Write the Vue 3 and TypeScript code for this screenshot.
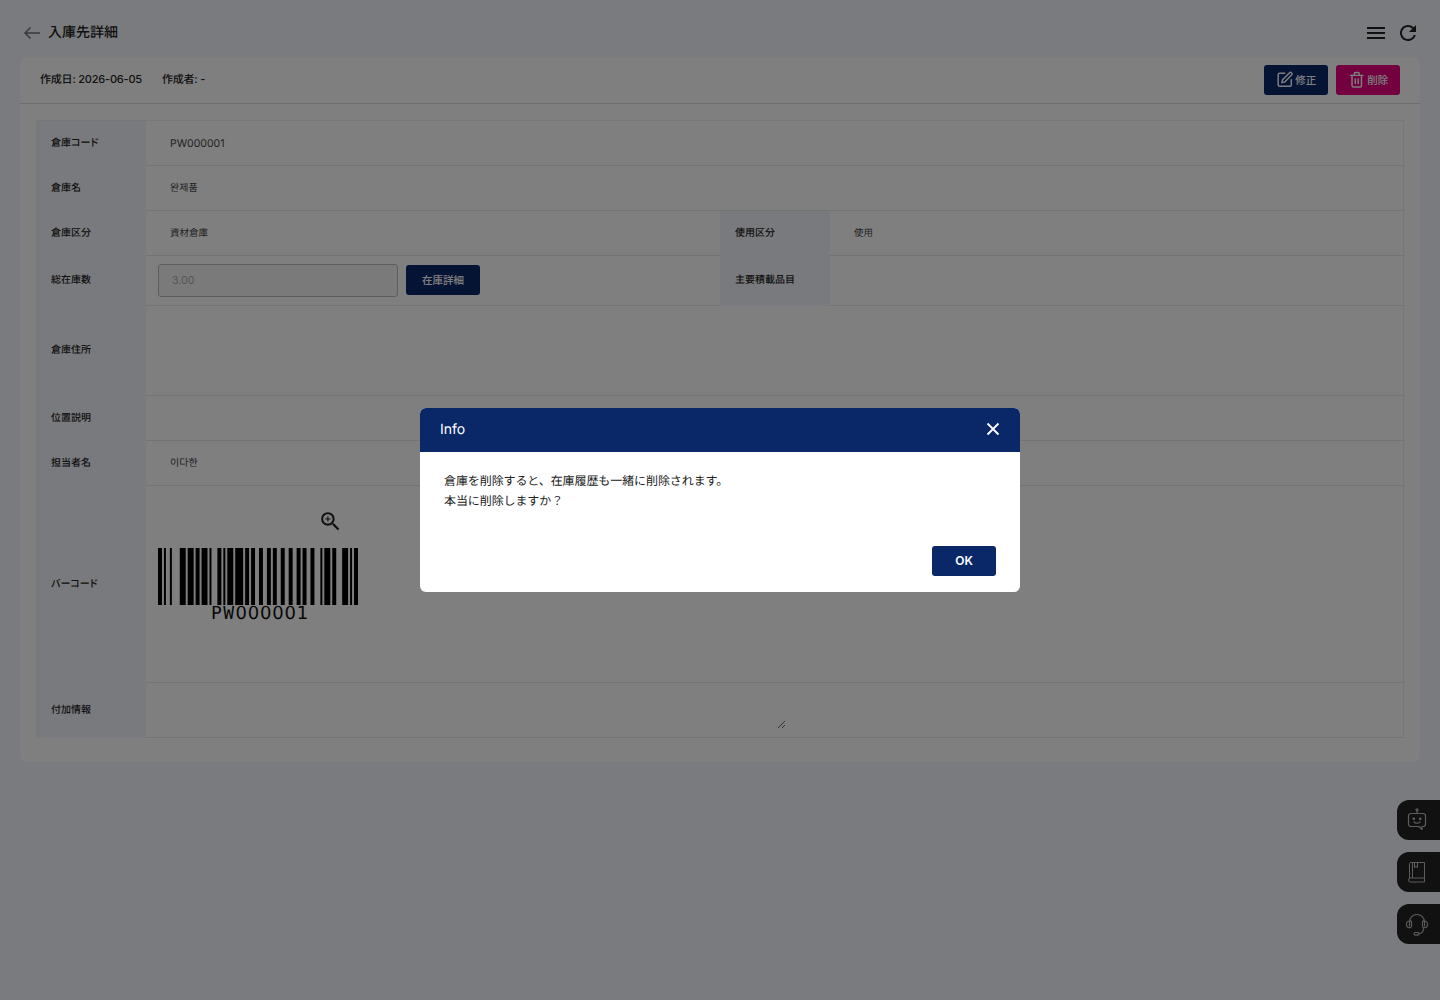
<script setup lang="ts">
// Code128 pieces for PW000001: start B, P, W, switch to C, 00, 00, 01, checksum, stop
const barcodeParts: string[] = [
  '11010010000',
  '11101110110',
  '11101000110',
  '10111011110',
  '11011001100',
  '11011001100',
  '11001101100',
  '11000101110',
  '1100011101011',
]

const modules = barcodeParts.join('')

const bars: { x: number; w: number }[] = []
for (let i = 0; i < modules.length; i++) {
  if (modules[i] !== '1') continue
  const last = bars[bars.length - 1]
  if (last && last.x + last.w === i) {
    last.w++
  } else {
    bars.push({ x: i, w: 1 })
  }
}
</script>

<template>
  <div class="page">
    <header class="topbar">
      <div class="topbar-left">
        <svg class="back" width="18" height="14" viewBox="0 0 18 14" fill="none" stroke="#6f7278" stroke-width="1.5">
          <path d="M17 7H2M7.5 1.5 2 7l5.5 5.5" />
        </svg>
        <h1 class="title">入庫先詳細</h1>
      </div>
      <div class="topbar-right">
        <svg width="18" height="14" viewBox="0 0 18 14" fill="none" stroke="#222" stroke-width="2">
          <path d="M0 2h18M0 7h18M0 12h18" />
        </svg>
        <svg width="24" height="24" viewBox="0 0 24 24" fill="#222">
          <path d="M17.65 6.35A7.958 7.958 0 0 0 12 4c-4.42 0-7.99 3.58-7.99 8s3.57 8 7.99 8c3.73 0 6.84-2.55 7.73-6h-2.08A5.99 5.99 0 0 1 12 18c-3.31 0-6-2.69-6-6s2.69-6 6-6c1.66 0 3.14.69 4.22 1.78L13 11h7V4l-2.35 2.35z" />
        </svg>
      </div>
    </header>

    <section class="card">
      <div class="card-head">
        <div class="meta">
          <span>作成日: 2026-06-05</span>
          <span>作成者: -</span>
        </div>
        <div class="actions">
          <button class="btn navy">
            <svg width="17.5" height="17.5" viewBox="0 0 24 24" fill="none" stroke="currentColor" stroke-width="2" stroke-linecap="round" stroke-linejoin="round">
              <path d="M12 3H5a2 2 0 0 0-2 2v14a2 2 0 0 0 2 2h14a2 2 0 0 0 2-2v-7" />
              <path d="M18.4 2.6a2.1 2.1 0 0 1 3 3L12 15l-4 1 1-4z" />
            </svg>
            <span class="btn-text">修正</span>
          </button>
          <button class="btn pink">
            <svg width="17.5" height="17.5" viewBox="0 0 24 24" fill="none" stroke="currentColor" stroke-width="2" stroke-linecap="round" stroke-linejoin="round">
              <path d="M3.500 6h17M8.500 6V4a2 2 0 0 1 2-2h3a2 2 0 0 1 2 2v2M18.500 6v14a2 2 0 0 1-2 2h-9a2 2 0 0 1-2-2V6M10 11v6M14 11v6" />
            </svg>
            <span class="btn-text">削除</span>
          </button>
        </div>
      </div>

      <div class="table">
        <div class="row h45">
          <div class="label">倉庫コード</div>
          <div class="value latin">PW000001</div>
        </div>
        <div class="row h45">
          <div class="label">倉庫名</div>
          <div class="value">완제품</div>
        </div>
        <div class="row h45">
          <div class="label">倉庫区分</div>
          <div class="value half jp">資材倉庫</div>
          <div class="label">使用区分</div>
          <div class="value jp">使用</div>
        </div>
        <div class="row h50">
          <div class="label">総在庫数</div>
          <div class="value half stock">
            <input class="stock-input" value="3.00" disabled />
            <button class="btn navy stock-btn"><span class="btn-text">在庫詳細</span></button>
          </div>
          <div class="label">主要積載品目</div>
          <div class="value"></div>
        </div>
        <div class="row h90">
          <div class="label">倉庫住所</div>
          <div class="value"></div>
        </div>
        <div class="row h45">
          <div class="label">位置説明</div>
          <div class="value"></div>
        </div>
        <div class="row h45">
          <div class="label">担当者名</div>
          <div class="value">이다한</div>
        </div>
        <div class="row h197">
          <div class="label">バーコード</div>
          <div class="value barcode-cell">
            <svg class="zoom-icon" width="25" height="25" viewBox="0 0 24 24" fill="#222">
              <path d="M15.5 14h-.79l-.28-.27A6.471 6.471 0 0 0 16 9.5 6.5 6.500 0 1 0 9.5 16c1.61 0 3.09-.59 4.23-1.57l.27.28v.79l5 4.99L20.49 19l-4.99-5zm-6 0C7.01 14 5 11.99 5 9.5S7.01 5 9.5 5 14 7.01 14 9.5 11.99 14 9.5 14z" />
              <path d="M12 10h-2v2H9v-2H7V9h2V7h1v2h2v1z" />
            </svg>
            <svg class="barcode" width="200" height="57" viewBox="0 0 101 57" preserveAspectRatio="none">
              <rect v-for="b in bars" :key="b.x" :x="b.x" y="0" :width="b.w" height="57" fill="#000" />
            </svg>
            <div class="barcode-text"><span class="bc-letters">PW</span><span class="bc-digits">000001</span></div>
          </div>
        </div>
        <div class="row h55">
          <div class="label">付加情報</div>
          <div class="value note-cell">
            <textarea class="note"></textarea>
          </div>
        </div>
      </div>
    </section>

    <aside class="side">
      <button class="side-btn">
        <svg width="22" height="24" viewBox="0 0 22 24" fill="none" stroke="currentColor" stroke-width="1.2" stroke-linecap="round" stroke-linejoin="round">
          <circle cx="11" cy="1.8" r="1" />
          <path d="M11 3v2.500M5 5.500h12a2.500 2.500 0 0 1 2.500 2.500v8a2.500 2.500 0 0 1-2.500 2.500h-1v3l-3-3H5A2.500 2.500 0 0 1 2.500 16V8A2.500 2.500 0 0 1 5 5.500z" />
          <path d="M8 14c1.800 1.500 4.200 1.500 6 0" />
          <circle cx="7.800" cy="10.800" r=".8" fill="currentColor" />
          <circle cx="14.200" cy="10.800" r=".8" fill="currentColor" />
        </svg>
      </button>
      <button class="side-btn">
        <svg width="18" height="22" viewBox="0 0 18 22" fill="none" stroke="currentColor" stroke-width="1">
          <path d="M1.500 18V2.500a1 1 0 0 1 1-1h14v15.500h-14a1.500 1.500 0 0 0 0 4h14V17" />
          <path d="M4.500 1.500V17M6.500 1.500v5l1.500-1 1.500 1v-5" />
        </svg>
      </button>
      <button class="side-btn">
        <svg width="24" height="24" viewBox="0 0 24 24" fill="none" stroke="currentColor" stroke-width="1.1" stroke-linecap="round">
          <path d="M4.500 14V10a7.500 7.500 0 0 1 15 0v4" />
          <path d="M6.500 9.500V14a1.800 1.800 0 0 1-1.800 1.800A3.400 3.400 0 0 1 1.500 12.300a3.400 3.400 0 0 1 3.200-3.300 1.800 1.800 0 0 1 1.800.5zM17.500 9.500V14a1.800 1.800 0 0 0 1.800 1.800 3.400 3.400 0 0 0 3.200-3.500A3.400 3.400 0 0 0 19.300 9a1.800 1.800 0 0 0-1.800.5z" />
          <path d="M18.500 16c0 3.500-2 5.500-5 5.800" />
          <rect x="9" y="20.500" width="5" height="2.600" rx="1.300" />
        </svg>
      </button>
    </aside>

    <div class="overlay">
      <div class="modal">
        <div class="modal-head">
          <span>Info</span>
          <svg width="14" height="14" viewBox="0 0 14 14" fill="none" stroke="#fff" stroke-width="1.8">
            <path d="M1.500 1.500l11 11M12.500 1.500l-11 11" />
          </svg>
        </div>
        <div class="modal-body">
          <p>倉庫を削除すると、在庫履歴も一緒に削除されます。</p>
          <p>本当に削除しますか？</p>
        </div>
        <div class="modal-foot">
          <button class="ok"><span>OK</span></button>
        </div>
      </div>
    </div>
  </div>
</template>

<style>
body {
  margin: 0;
  background: #f5f7fc;
}
</style>

<style scoped>
.page {
  min-height: 1000px;
  box-sizing: border-box;
  padding: 0 20px;
  background: #f5f7fc;
  color: #222;
  font-family: Inter, "Noto Sans CJK JP", "Noto Sans CJK KR", sans-serif;
  text-rendering: geometricPrecision;
}

.topbar {
  height: 57px;
  display: flex;
  align-items: center;
  justify-content: space-between;
  padding: 8px 0 0 3px;
  box-sizing: border-box;
}

.topbar-left,
.topbar-right {
  display: flex;
  align-items: center;
}

.topbar-left {
  gap: 7px;
}

.topbar-right {
  gap: 11px;
}

.title {
  margin: 0;
  font-size: 14px;
  font-weight: 500;
  line-height: 20px;
}

.card {
  background: #fff;
  border-radius: 8px;
  padding-bottom: 24px;
}

.card-head {
  height: 47px;
  box-sizing: border-box;
  padding: 0 20px;
  display: flex;
  align-items: center;
  justify-content: space-between;
  border-bottom: 1px solid #ddd;
}

.meta {
  display: flex;
  gap: 20px;
  padding-bottom: 2px;
  font-size: 11px;
  font-weight: 500;
  letter-spacing: -0.2px;
}

.actions {
  display: flex;
  gap: 8px;
}

.btn {
  height: 30px;
  width: 64px;
  border: 0;
  border-radius: 3px;
  color: #fff;
  font-family: inherit;
  font-size: 10.5px;
  font-weight: 500;
  display: flex;
  align-items: center;
  justify-content: center;
  gap: 2px;
  padding: 0;
}

.btn-text {
  padding-bottom: 1px;
}

.navy {
  background: #0a2768;
}

.pink {
  background: #e6007e;
}

.table {
  margin: 16px 16px 0;
  border-top: 1px solid #eee;
  border-right: 1px solid #eee;
}

.row {
  display: flex;
  box-sizing: border-box;
  border-bottom: 1px solid #e6e6e6;
}

.h45 { height: 45px; }
.h50 { height: 50px; }
.h90 { height: 90px; }
.h197 { height: 197px; }
.h55 { height: 55px; }

.label {
  width: 110px;
  flex: none;
  box-sizing: border-box;
  padding: 0 0 4px 15px;
  margin-bottom: -1px;
  background: #f3f5fb;
  font-size: 10px;
  font-weight: 500;
  font-feature-settings: "palt";
  display: flex;
  align-items: center;
}

.h50 .label,
.h90 .label {
  padding-bottom: 6px;
}

.value {
  flex: 1;
  min-width: 0;
  padding: 0 0 3px 24px;
  font-size: 10px;
  color: #444;
  display: flex;
  align-items: center;
}

.value.half {
  flex: none;
  width: 574px;
  box-sizing: border-box;
}

.value.latin {
  font-size: 10.5px;
  padding-bottom: 0;
}

.value.jp {
  font-size: 9.5px;
}

.value.stock {
  padding: 0 0 0 12px;
  gap: 8px;
}

.stock-input {
  width: 240px;
  height: 33px;
  box-sizing: border-box;
  border: 1px solid #bbb;
  border-radius: 3px;
  background: #f4f4f4;
  padding: 0 13px 1px;
  font-family: inherit;
  font-size: 10.5px;
  color: #aaa;
}

.stock-btn {
  width: 74px;
  margin-bottom: 2px;
}

.value.barcode-cell {
  padding: 0 0 0 12px;
  flex-direction: column;
  align-items: flex-start;
  justify-content: flex-start;
}

.zoom-icon {
  display: block;
  margin: 23px 0 0 160px;
}

.barcode {
  display: block;
  margin-top: 14px;
}

.barcode-text {
  width: 200px;
  margin: -1px 0 0 2px;
  text-align: center;
  font-size: 18px;
  line-height: 20px;
  color: #111;
}

.bc-letters {
  font-family: "DejaVu Sans Mono", monospace;
  letter-spacing: 1.45px;
}

.bc-digits {
  font-family: "DejaVu Sans", sans-serif;
  letter-spacing: 0.8px;
}

.value.note-cell {
  padding: 0 0 0 12px;
  align-items: flex-start;
}

.note {
  width: 628px;
  height: 46px;
  box-sizing: border-box;
  border: 0;
  background: transparent;
  outline: 0;
}

.side {
  position: fixed;
  right: 0;
  top: 800px;
  display: flex;
  flex-direction: column;
  gap: 12px;
}

.side-btn {
  width: 43px;
  height: 40px;
  border: 0;
  padding: 0 3px 0 0;
  border-radius: 12px 0 0 12px;
  background: #222;
  color: #bbb;
  display: flex;
  align-items: center;
  justify-content: center;
}

.overlay {
  position: fixed;
  inset: 0;
  background: rgba(0, 0, 0, 0.5);
  display: flex;
  align-items: center;
  justify-content: center;
}

.modal {
  width: 600px;
  background: #fff;
  border-radius: 6px;
  overflow: hidden;
}

.modal-head {
  height: 44px;
  box-sizing: border-box;
  padding: 0 20px 2px;
  background: #0a2768;
  color: #fff;
  font-size: 14px;
  font-weight: 400;
  display: flex;
  align-items: center;
  justify-content: space-between;
}

.modal-body {
  padding: 19px 24px 0;
  height: 75px;
  font-size: 12px;
  line-height: 20px;
  letter-spacing: -0.09px;
  color: #222;
}

.modal-body p {
  margin: 0;
}

.modal-foot {
  display: flex;
  justify-content: flex-end;
  padding: 0 24px 16px;
}

.ok {
  width: 64px;
  height: 30px;
  border: 0;
  padding: 0 0 2px;
  border-radius: 3px;
  background: #0a2768;
  color: #fff;
  font-family: inherit;
  font-size: 12px;
  font-weight: 600;
}
</style>
